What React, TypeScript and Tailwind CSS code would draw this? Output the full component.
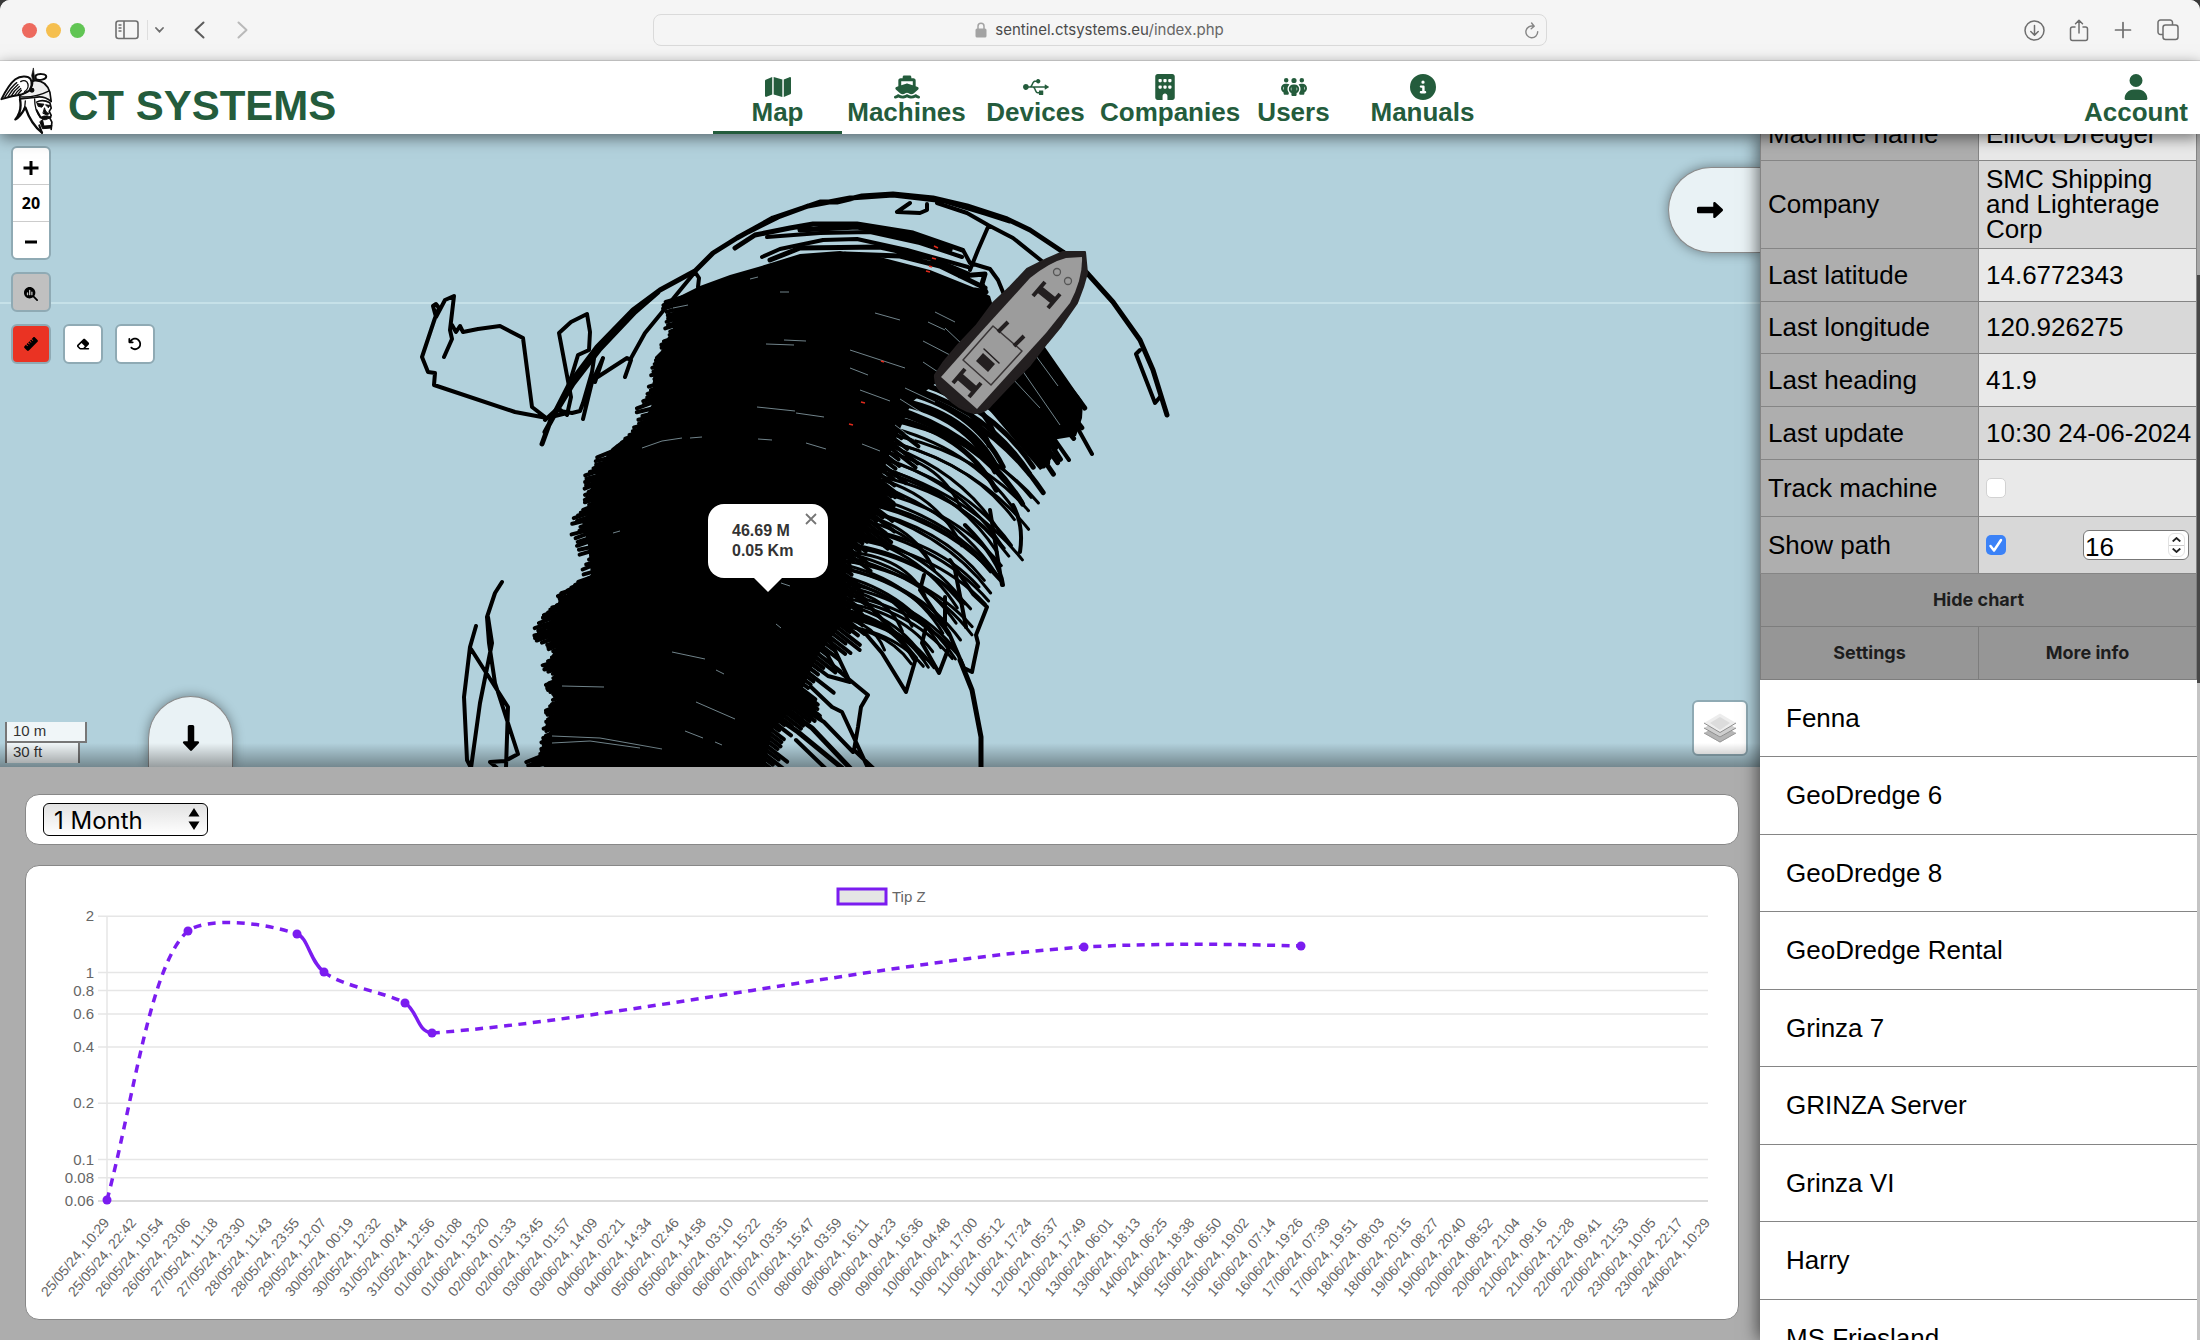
import React, { useState } from "react";
import {
  FaMap,
  FaShip,
  FaUsb,
  FaBuilding,
  FaPeopleGroup,
  FaCircleInfo,
  FaUser,
  FaMagnifyingGlassChart,
  FaRuler,
  FaEraser,
  FaArrowRotateLeft,
  FaRightLong,
  FaDownLong,
} from "react-icons/fa6";

type Point = [number, number];

/* ---------- helpers ---------- */

function createRandom(seed: number) {
  let s = seed;
  return () => {
    s = (s * 1664525 + 1013904223) % 4294967296;
    return s / 4294967296;
  };
}

function along(points: Point[], t: number): Point {
  const scaled = Math.min(0.9999, Math.max(0, t)) * (points.length - 1);
  const i = Math.floor(scaled);
  const f = scaled - i;
  return [
    points[i][0] + (points[i + 1][0] - points[i][0]) * f,
    points[i][1] + (points[i + 1][1] - points[i][1]) * f,
  ];
}

const toPath = (points: Point[]) => "M" + points.map((p) => p.map((v) => v.toFixed(1)).join(" ")).join("L");

/* ---------- browser bar ---------- */

function BrowserBar() {
  return (
    <div className="grid h-[61px] shrink-0 grid-cols-[1fr_894px_1fr] items-center border-b border-[#dcdcdc] bg-[#f5f5f5] text-[#6e6e6e]">
      <div className="flex items-center pl-[22px]">
        <div className="flex gap-[9px]">
          <span className="size-[15px] rounded-full bg-[#ed6a5e]" />
          <span className="size-[15px] rounded-full bg-[#f5bf4f]" />
          <span className="size-[15px] rounded-full bg-[#61c554]" />
        </div>
        <button aria-label="Sidebar" className="ml-[30px]">
          <svg width="24" height="20" viewBox="0 0 24 20" fill="none" stroke="currentColor" strokeWidth="1.6">
            <rect x="1" y="1" width="22" height="17.5" rx="2.5" />
            <path d="M9 1v17.5M3.5 5h3M3.5 8h3M3.5 11h3" />
          </svg>
        </button>
        <span className="ml-2 h-5 w-px bg-[#dedede]" />
        <button aria-label="Tab groups" className="ml-[7px]">
          <svg width="9" height="6" viewBox="0 0 9 6" fill="none" stroke="currentColor" strokeWidth="1.8" strokeLinecap="round">
            <path d="M1 1l3.5 3.7L8 1" />
          </svg>
        </button>
        <button aria-label="Back" className="ml-[30px]">
          <svg width="11" height="18" viewBox="0 0 11 18" fill="none" stroke="#5c5c5c" strokeWidth="2" strokeLinecap="round" strokeLinejoin="round">
            <path d="M9.5 1.5L1.5 9l8 7.5" />
          </svg>
        </button>
        <button aria-label="Forward" className="ml-8">
          <svg width="11" height="18" viewBox="0 0 11 18" fill="none" stroke="#b9b9b9" strokeWidth="2" strokeLinecap="round" strokeLinejoin="round">
            <path d="M1.5 1.5L9.5 9l-8 7.5" />
          </svg>
        </button>
      </div>
      <div className="flex h-8 items-center rounded-lg border border-[#dadada] pr-[7px] pl-5">
        <div className="flex flex-1 items-center justify-center gap-2 text-base">
          <svg width="12" height="16" viewBox="0 0 12 16" fill="none">
            <rect x="0.5" y="6.5" width="11" height="9" rx="1.5" fill="#a3a3a3" />
            <path d="M3 7V4.2a3 3 0 016 0V7" stroke="#a3a3a3" strokeWidth="1.5" />
          </svg>
          <span className="font-['Inter',sans-serif] text-[15px] text-[#4b4b4b]">
            sentinel.ctsystems.eu<span className="text-[#666]">/index.php</span>
          </span>
        </div>
        <button aria-label="Reload">
          <svg width="14" height="17" viewBox="0 0 14 17" fill="none" stroke="#858585" strokeWidth="1.4" strokeLinecap="round" strokeLinejoin="round">
            <path d="M12.7 9.8a5.9 5.9 0 11-4.2-5.6M6.6 1l2.6 3.2-3 2.6" />
          </svg>
        </button>
      </div>
      <div className="flex items-center justify-end gap-6 pr-[21px]">
        <button aria-label="Downloads">
          <svg width="21" height="21" viewBox="0 0 21 21" fill="none" stroke="currentColor" strokeWidth="1.5" strokeLinecap="round" strokeLinejoin="round">
            <circle cx="10.5" cy="10.5" r="9.5" />
            <path d="M10.5 5.5v9.5M6.8 11.5l3.7 3.7 3.7-3.7" />
          </svg>
        </button>
        <button aria-label="Share">
          <svg width="20" height="23" viewBox="0 0 20 23" fill="none" stroke="currentColor" strokeWidth="1.5" strokeLinecap="round" strokeLinejoin="round">
            <path d="M6 8H3.5A2 2 0 001.500 10v9.500a2 2 0 002 2h13a2 2 0 002-2V10a2 2 0 00-2-2H14M10 14V1.500M6.500 4.800L10 1.300l3.500 3.500" />
          </svg>
        </button>
        <button aria-label="New tab">
          <svg width="20" height="18" viewBox="0 0 20 18" fill="none" stroke="currentColor" strokeWidth="1.700" strokeLinecap="round">
            <path d="M10 1.500v15M2.500 9h15" />
          </svg>
        </button>
        <button aria-label="Tab overview">
          <svg width="22" height="22" viewBox="0 0 22 22" fill="none" stroke="currentColor" strokeWidth="1.500">
            <rect x="6" y="6" width="15" height="14.500" rx="2.500" />
            <path d="M6 15.500H3.500A2.500 2.500 0 011 13V3.500A2.500 2.500 0 013.500 1H13a2.500 2.500 0 012.500 2.500V6" />
          </svg>
        </button>
      </div>
    </div>
  );
}

/* ---------- header ---------- */

function HelmetLogo() {
  return (
    <svg width="54" height="67" viewBox="0 20 162 202" fill="none" stroke="#0b0b0b" strokeWidth="5" strokeLinejoin="round" strokeLinecap="round">
      <path d="M58 112c2 30 0 50-14 68 12-6 22-20 32-38 8 26 24 58 50 76l2-30 30 18-4-90-20-12z" fill="#fff" stroke="none" />
      <path d="M98 62c26-4 44 10 52 34l4 28c-14-12-34-16-50-12l-44 4c-2-6 0-12 4-14 20-4 34-14 34-40z" fill="#ededed" />
      <path d="M62 110c28 2 62-6 86-18" strokeWidth="4" />
      <path d="M100 24l-5 22 4 18 6-4-2-14z" fill="#0b0b0b" strokeWidth="2" />
      <path d="M107 46c8-7 32-6 32 3s-22 13-32 7z" strokeWidth="6" fill="#fff" />
      <path d="M4 117c8-16 26-48 42-60 14-10 38-12 46 0 5 10 2 24-4 34l-24 12c-18 2-42 8-60 14z" fill="#fff" strokeWidth="6" />
      <path d="M14 111c10-16 22-34 36-44M24 109c8-14 18-26 30-36M34 107c6-12 14-20 24-28M44 105c4-8 10-14 18-20M54 102l10-12M62 64c10-6 20-2 22 8 2 10-4 18-10 22" strokeWidth="4" />
      <circle cx="96" cy="90" r="5" fill="#0b0b0b" />
      <path d="M60 118c4 22 0 44-14 60 10-4 20-18 30-36 8 24 24 56 50 76" strokeWidth="7" />
      <path d="M76 122c0 12-2 22-6 30M104 116c0 18 4 40 16 54" strokeWidth="4" />
      <path d="M110 126c10-6 26-6 40 2l4 16-6 10 6 12-4 8 6 12-2 22" strokeWidth="5" />
      <path d="M112 130l20 2-6 9-10-2zM138 134l12 2-4 6zM134 144c2 8 6 14 14 16l-6 5-12-5zM122 172c8-6 22-6 32 0l-12 5c-8 4-16 2-20-5zM128 180l4 18 24-2-2 8-26 2-8-20z" fill="#0b0b0b" strokeWidth="3" />
      <path d="M110 150l12 22M118 196l8 22" strokeWidth="6" />
    </svg>
  );
}

const NAV = [
  { label: "Map", Icon: FaMap, active: true },
  { label: "Machines", Icon: FaShip },
  { label: "Devices", Icon: FaUsb },
  { label: "Companies", Icon: FaBuilding },
  { label: "Users", Icon: FaPeopleGroup },
  { label: "Manuals", Icon: FaCircleInfo },
];

function Header() {
  return (
    <header className="relative z-30 grid h-[73px] shrink-0 grid-cols-[1fr_auto_1fr] bg-white text-[#245c3c] shadow-[0_4px_14px_rgba(0,0,0,0.5)]">
      <a href="#home" className="flex items-end gap-[14px]">
        <HelmetLogo />
        <span className="pb-[5px] text-[42px] leading-[46px] font-bold">CT SYSTEMS</span>
      </a>
      <nav className="flex">
        {NAV.map(({ label, Icon, active }) => (
          <a
            key={label}
            href={"#" + label.toLowerCase()}
            className={
              "flex w-[129px] flex-col border-b-[3px] pt-[13px] text-center text-[26px] leading-6 font-bold whitespace-nowrap " +
              (active ? "border-[#245c3c]" : "border-transparent")
            }
          >
            <Icon className="mx-auto shrink-0" />
            <span>{label}</span>
          </a>
        ))}
      </nav>
      <a href="#account" className="ml-auto flex flex-col pt-[13px] pr-3 text-center text-[26px] leading-6 font-bold">
        <FaUser className="mx-auto shrink-0" />
        <span>Account</span>
      </a>
    </header>
  );
}

/* ---------- map ---------- */

const LEFT_EDGE: Point[] = [
  [676, 298], [672, 318], [674, 338], [655, 357], [653, 380], [653, 402], [642, 425], [612, 448],
  [597, 470], [590, 490], [594, 505], [582, 522], [588, 545], [591, 575], [568, 592], [562, 606],
  [549, 622], [546, 637], [558, 650], [548, 662], [556, 675], [550, 685], [566, 697], [556, 710],
  [552, 724], [548, 738], [546, 748], [540, 758], [545, 768],
];

const RIGHT_EDGE: Point[] = [
  [990, 296], [1000, 330], [950, 372], [912, 402], [895, 440], [880, 480], [878, 500], [866, 530],
  [846, 560], [846, 600], [840, 626], [818, 655], [802, 690], [796, 706], [772, 730], [765, 768],
];

const TOP_EDGE: Point[] = [
  [676, 298], [700, 286], [730, 275], [758, 267], [800, 254], [840, 251], [880, 257], [930, 270], [975, 288],
];

const FAN_START: Point[] = [[940, 300], [915, 350], [890, 410], [865, 470], [838, 530], [826, 580], [806, 630]];
const FAN_END: Point[] = [[1084, 402], [1060, 462], [1040, 500], [1016, 560], [984, 602], [955, 650], [916, 668]];

const TRACK_LINES: string[] = [
  "M444 357L452 339L450 330L454 296L445 300L436 317L433 306L436 304L439 308L435 318L422 357L428 372L435 373L434 385L515 412L547 418L567 413",
  "M452 325L456 332L460 326L463 332L478 329L500 326L523 338L532 407L545 417",
  "M545 420L558 408L567 415L571 397L559 333L571 322L587 314L590 332L589 350L578 355L568 388L557 410",
  "M595 352L592 372L583 403L580 411L572 413L560 411",
  "M583 419L592 382L603 358L595 382",
  "M593 380L627 358L631 360L625 377",
  "M630 360L645 333L695 272L699 278L698 287",
  "M937 203L967 213L988 225L1013 238L1043 262",
  "M910 203L897 212L920 213L927 210L927 204",
  "M988 227L978 250L970 270",
  "M963 250L970 263L990 269L998 280L1005 297",
  "M1140 350L1136 354L1155 403L1160 397",
  "M823 647L834 667L868 695L861 707L858 727L854 750L873 768",
  "M865 633L882 653L906 692L916 658L895 633L857 593",
  "M811 687L832 707L842 712L868 768",
  "M950 560L973 594L987 607L976 635L978 643L974 662L972 672L964 668",
  "M924 575L920 590L949 633L964 668",
  "M945 597L945 627",
  "M955 570L966 627",
  "M893 600L926 627L922 643L939 673L949 647",
  "M796 740L825 768",
  "M794 703L824 722L853 752",
  "M502 582L495 593L487 617L489 643L495 683L518 754L505 761L490 762L497 768",
  "M476 626L470 647L464 697L467 760L471 768L480 703L492 643L488 617",
  "M471 649L508 707L506 768",
  "M767 237L820 233L870 232L920 243L962 257",
  "M762 257L780 249L823 240L857 239L907 250L968 267",
  "M830 640L850 682L828 676L812 664",
  "M1072 418L1092 454",
  "M1048 430L1069 460",
  "M1013 505Q1024 525 1020 552",
  "M990 510L1002 585",
  "M965 525Q1000 560 1003 585",
];

const HEAVY_LINES: string[] = [
  "M542 444L550 422L570 383L597 347L633 310L660 290L695 271L713 253L737 238L773 218L820 202L837 202L862 196L893 194L933 198L967 206L1007 219L1030 230L1063 252L1087 273L1113 302L1140 340L1153 370L1167 415",
  "M545 432L556 412L573 384L600 349L635 312L658 292",
  "M748 232L778 217L808 206L850 198L893 195L945 201L985 213L1010 221",
  "M735 248L755 235L790 228L813 224L857 224L913 233L962 250",
  "M770 260L800 248L880 247L930 258L968 274",
  "M845 254L900 256L940 266L985 288",
  "M800 230L857 227L910 237L950 250",
  "M960 276L985 274L982 284L986 292L975 290",
  "M960 660L972 690L981 737L981 768",
  "M769 712L798 732L842 768",
  "M780 705L812 728L850 768",
];

const GAP_LINES: string[] = [
  "M750 279L758 277", "M780 292L789 292", "M766 344L794 345", "M784 340L806 341",
  "M875 313L900 320", "M928 322L945 330", "M945 328L963 345", "M923 341L950 355", "M923 362L938 372",
  "M850 350L905 368", "M757 407L795 411", "M796 413L824 417", "M642 448L662 441L682 438", "M690 438L702 437",
  "M758 439L772 440", "M806 443L826 449", "M860 390L890 401", "M672 652L705 659", "M696 702L735 719",
  "M781 583L790 586", "M776 624L781 628", "M685 731L703 738", "M562 686L604 687",
  "M552 736L600 738L662 749", "M552 743L590 741L640 748", "M673 308L688 305",
  "M850 368L868 375", "M905 388L935 402", "M900 399L930 418", "M895 425L915 440", "M862 444L880 451", "M613 533L620 531",
  "M935 312L955 322", "M715 742L722 745", "M716 670L724 674",
  "M1012 378L1040 408", "M1022 370L1060 425", "M1036 356L1058 386",
];

function buildFringe() {
  const rnd = createRandom(17);
  const out: { d: string; w: number }[] = [];
  let reach = 0;
  let run = 0;
  for (let i = 0; i < 170; i++) {
    if (run <= 0) {
      run = 2 + Math.floor(rnd() * 6);
      reach = rnd() * 13;
    }
    run -= 1;
    const [x, y] = along(LEFT_EDGE, i / 170);
    const dx = -reach - rnd() * 6;
    const slope = 0.2 + rnd() * 0.18;
    out.push({ d: toPath([[x + dx + 3, y + 4], [x + 24, y + 4 - (24 - dx) * slope]]), w: 4 });
  }
  for (let i = 0; i < 100; i++) {
    const [x, y] = along(RIGHT_EDGE, 0.25 + (i / 100) * 0.75);
    const len = 4 + rnd() * 28;
    out.push({ d: toPath([[x - 22, y - 16], [x + len * 0.75, y + len * 0.62]]), w: 4 });
  }
  for (let i = 0; i < 84; i++) {
    const t = i / 84;
    const [sx, sy] = along(FAN_START, t + (rnd() - 0.5) * 0.02);
    const [ex, ey] = along(FAN_END, t + (rnd() - 0.5) * 0.08);
    const k = 0.86 + rnd() * 0.18 - (rnd() > 0.8 ? 0.3 : 0);
    const x2 = sx + (ex - sx) * k;
    const y2 = sy + (ey - sy) * k + 4;
    const cx = (sx + x2) / 2 + 22;
    const cy = (sy + y2) / 2 - 22;
    out.push({
      d: `M${sx.toFixed(1)} ${sy.toFixed(1)}Q${cx.toFixed(1)} ${cy.toFixed(1)} ${x2.toFixed(1)} ${y2.toFixed(1)}`,
      w: t < 0.35 ? 5 : 3,
    });
  }
  return out;
}

const FRINGE = buildFringe();
const MASS = toPath([...TOP_EDGE, ...RIGHT_EDGE, ...LEFT_EDGE.slice(1).reverse()]) + "Z";

function Ship() {
  return (
    <g strokeLinecap="round" strokeLinejoin="round">
      <path
        d="M1085 252L1087 273L1083 287L1077 303L1061 326L1047 343L1030 365L1010 385L993 403Q985 414 974 413Q958 409 947 397Q934 388 935 375L943 363L958 345L976 326L993 303L1010 287L1027 269L1047 259L1063 252Z"
        fill="#231f20"
        stroke="#231f20"
        strokeWidth="2"
      />
      <path d="M1082 257Q1083 278 1070 303L1046 333L977 409L941 377L980 333L1030 278Q1050 262 1066 258Z" fill="#9c9c9c" />
      <path d="M993 326L1022 351L991 385L963 360Z" fill="none" stroke="#3a3637" strokeWidth="1.500" />
      <path d="M983 353L995 364L988 372L976 361Z" fill="#231f20" />
      <path d="M984 349L999 363" stroke="#231f20" strokeWidth="1.500" />
      <g fill="none" stroke="#231f20" strokeLinecap="butt">
        <path d="M1008 322L998 332M1024 336L1014 346" strokeWidth="4" />
        <path d="M1045 282L1033 296M1060 294L1048 308M965 369L953 383M981 383L969 397" strokeWidth="4" />
        <path d="M1039 289L1054 301M959 376L975 390" strokeWidth="8" />
      </g>
      <circle cx="1057" cy="272" r="3.500" fill="none" stroke="#555" strokeWidth="1.300" />
      <circle cx="1068" cy="281" r="3.500" fill="none" stroke="#555" strokeWidth="1.300" />
    </g>
  );
}

function MapDrawing() {
  return (
    <svg className="absolute inset-0 size-full" viewBox="0 134 1760 633" preserveAspectRatio="xMidYMin slice" aria-hidden="true">
      <path d="M0 303H1760" stroke="#cde6ec" strokeWidth="1.500" />
      <path d={MASS} fill="#000" />
      <path d="M1000 300L1040 340L1083 402L1082 418L1076 436L1052 440L1050 464L1040 470L985 405L960 370Z" fill="#000" />
      <g fill="none" stroke="#000" strokeLinecap="round" strokeLinejoin="round">
        {FRINGE.map((s, i) => (
          <path key={i} d={s.d} strokeWidth={s.w} />
        ))}
        <path d={TRACK_LINES.join("")} strokeWidth="4" />
        <path d={HEAVY_LINES.join("")} strokeWidth="5" />
      </g>
      <path d={GAP_LINES.join("")} fill="none" stroke="#b2d1dc" strokeOpacity="0.7" strokeWidth="0.900" />
      <path d="M934 246l4 2M932 258l4 1M929 266l3 1M926 271l4 1M881 361l3 1M861 402l4 1M849 424l4 1" stroke="#e02a1c" strokeWidth="1.500" />
      <Ship />
    </svg>
  );
}

const MAP_BTN = "flex size-9 items-center justify-center text-sm text-black";
const MAP_FRAME = "rounded-md border-2 border-[#8faab4] bg-white overflow-hidden";

function MapView() {
  return (
    <section aria-label="Map" className="relative min-h-0 flex-1 overflow-hidden bg-[#b2d1dc]">
      <MapDrawing />

      <div className="absolute top-3 left-[11px] flex flex-col items-start gap-3 font-['Noto_Sans',sans-serif]">
        <div className={MAP_FRAME}>
          <button aria-label="Zoom in" className={MAP_BTN + " pt-1"}>
            <svg width="16" height="16" viewBox="0 0 16 16" stroke="#000" strokeWidth="3"><path d="M8 1v14M.5 8h15" /></svg>
          </button>
          <div className="flex h-[38px] w-9 items-center justify-center border-y border-[#ccc] text-base font-bold">20</div>
          <button aria-label="Zoom out" className={MAP_BTN + " pt-1"}>
            <svg width="12" height="4" viewBox="0 0 12 4" stroke="#000" strokeWidth="3"><path d="M0 2h12" /></svg>
          </button>
        </div>
        <div className="rounded-md border-2 border-[#8faab4] bg-[#c0c0c0]">
          <button aria-label="Chart area" className={MAP_BTN + " pt-1"}><FaMagnifyingGlassChart /></button>
        </div>
        <div className="flex gap-3">
          <div className="rounded-md border-2 border-[#8faab4] bg-[#ea3323]">
            <button aria-label="Measure" className={MAP_BTN}><FaRuler /></button>
          </div>
          <div className={MAP_FRAME}>
            <button aria-label="Erase" className={MAP_BTN}><FaEraser /></button>
          </div>
          <div className={MAP_FRAME}>
            <button aria-label="Undo" className={MAP_BTN}><FaArrowRotateLeft /></button>
          </div>
        </div>
      </div>

      <div className="absolute bottom-1 left-[5px] flex flex-col items-start text-[15px] leading-[17px] text-[#333]">
        <div className="w-[82px] border-2 border-t-0 border-[#777] bg-white/80 pb-[2px] pl-[6px]">10 m</div>
        <div className="w-[75px] border-x-2 border-[#777] bg-white/80 pb-[3px] pl-[6px]">30 ft</div>
      </div>

      <button
        aria-label="Collapse chart"
        className="absolute bottom-0 left-[148px] flex h-[71px] w-[85px] justify-center rounded-t-full border border-b-0 border-[#8a8a8a] bg-[#e9f2f5] pt-7 text-[26px] shadow-[0_0_12px_rgba(0,0,0,0.4)]"
      >
        <FaDownLong />
      </button>

      <button
        aria-label="Collapse panel"
        className="absolute top-[33px] right-0 flex h-[86px] w-[92px] items-center rounded-l-full border border-r-0 border-[#8a8a8a] bg-[#e9f2f5] pl-7 text-[26px] shadow-[0_0_12px_rgba(0,0,0,0.4)]"
      >
        <FaRightLong />
      </button>

      <button
        aria-label="Layers"
        className="absolute right-3 bottom-[11px] flex size-14 items-center justify-center rounded-md border-2 border-[#8faab4] bg-white"
      >
        <svg width="32" height="30" viewBox="0 0 32 30">
          <path d="M0 20l16-9 16 9-16 9.500z" fill="#b5b5b5" />
          <path d="M0 20l16 9 16-9" fill="none" stroke="#999" />
          <path d="M0 15l16-9 16 9-16 9.500z" fill="#cfcfcf" />
          <path d="M0 15l16 9 16-9" fill="none" stroke="#8d8d8d" />
          <path d="M0 10L16 .5 32 10l-16 9.500z" fill="#ededed" />
          <path d="M6 10l10-6 10 6-10 7z" fill="#dcdcdc" />
          <path d="M0 10l16 9.500L32 10" fill="none" stroke="#8d8d8d" />
        </svg>
      </button>

      <div className="absolute bottom-[175px] left-[708px] flex flex-col items-center">
        <div className="relative h-[74px] w-[120px] rounded-2xl bg-white pt-[17px] pl-6 text-base leading-5 font-bold text-[#333]">
          46.69 M<br />
          0.05 Km
          <button aria-label="Close" className="absolute top-[9px] right-[11px] flex">
            <svg width="12" height="12" viewBox="0 0 12 12" stroke="#757575" strokeWidth="1.800"><path d="M1 1l10 10M11 1L1 11" /></svg>
          </button>
        </div>
        <svg width="28" height="14" viewBox="0 0 28 14"><path d="M0 0h28L14 14z" fill="#fff" /></svg>
      </div>

      <div className="pointer-events-none absolute inset-x-0 bottom-0 h-6 bg-linear-to-t from-black/35 to-transparent" />
    </section>
  );
}

/* ---------- chart ---------- */

const Y_TICKS = [2, 1, 0.8, 0.6, 0.4, 0.2, 0.1, 0.08, 0.06];
const yOf = (v: number) => 973.5 - Math.log2(v) * 56.3;

const pad = (n: number) => String(n).padStart(2, "0");
const START = Date.UTC(2024, 4, 25, 10, 29, 58, 600);
const X_STEP = (30 * 24 * 3600 * 1000) / 59;
const X_LABELS = Array.from({ length: 60 }, (_, i) => {
  const d = new Date(START + i * X_STEP);
  return `${pad(d.getUTCDate())}/${pad(d.getUTCMonth() + 1)}/24, ${pad(d.getUTCHours())}:${pad(d.getUTCMinutes())}`;
});

const DOTS: Point[] = [
  [107, 1201], [188, 932], [297, 935], [324, 973], [405, 1004], [432, 1034], [1084, 948], [1301, 947],
];

function Chart() {
  return (
    <svg viewBox="26 867 1712 453" className="block w-full" role="img" aria-label="Tip Z chart" fontSize="15" fill="#666">
      <rect x="838" y="890" width="48" height="15" fill="#e5e5e5" stroke="#7b1cf0" strokeWidth="3" />
      <text x="892" y="903">Tip Z</text>
      {Y_TICKS.map((v) => (
        <g key={v}>
          <path d={`M98 ${yOf(v)}H1708`} stroke={v === 0.06 ? "#cfcfcf" : "#e6e6e6"} strokeWidth="1.500" />
          <text x="94" y={yOf(v) + 5} textAnchor="end">{v}</text>
        </g>
      ))}
      <path d="M107 917V1202" stroke="#e6e6e6" strokeWidth="1.500" />
      <g fontSize="14">
        {X_LABELS.map((label, i) => {
          const x = 110 + i * 27.13;
          return (
            <text key={label} x={x} y="1224" textAnchor="end" transform={`rotate(-50 ${x} 1224)`}>{label}</text>
          );
        })}
      </g>
      <g fill="none" stroke="#7b1cf0" strokeWidth="3.500">
        <path
          strokeDasharray="8 6.500"
          d="M107 1201C134 1100 150 965 188 932C207 918 262 923 297 935M324 973C343 988 385 993 405 1004M432 1034C620 1020 900 960 1084 948C1160 944 1230 945 1301 947"
        />
        <path d="M297 935C308 938 310 963 324 973M405 1004C418 1012 417 1033 432 1034" />
      </g>
      {DOTS.map(([x, y]) => (
        <circle key={x} cx={x} cy={y} r="4.500" fill="#7b1cf0" />
      ))}
    </svg>
  );
}

function ChartPanel() {
  return (
    <section className="flex shrink-0 flex-col gap-5 bg-[#adadad] pt-[27px] pr-[21px] pb-5 pl-[25px]">
      <div className="flex h-[51px] items-center rounded-[14px] border border-[#888] bg-white pl-[17px]">
        <div className="relative">
          <select
            aria-label="Period"
            defaultValue="1 Month"
            className="h-[33px] w-[165px] appearance-none rounded-md border border-black bg-linear-to-b from-[#e2e2e2] to-white pt-[3px] pl-[10px] font-['Inter',sans-serif] text-2xl leading-7 text-black"
          >
            <option>1 Day</option>
            <option>1 Week</option>
            <option>1 Month</option>
          </select>
          <svg className="pointer-events-none absolute top-[5px] right-2" width="12" height="22" viewBox="0 0 12 22">
            <path d="M6 0l5.500 8.500H.5zM6 22l5.500-8.500H.5z" />
          </svg>
        </div>
      </div>
      <div className="rounded-[14px] border border-[#888] bg-white">
        <Chart />
      </div>
    </section>
  );
}

/* ---------- side panel ---------- */

const LABEL = "border border-[#858585] bg-[#aeaeae] px-[7px] text-left font-normal";
const LIGHT = "border border-[#858585] bg-[#e9e9e9] px-[7px] whitespace-nowrap";
const DARK = "border border-[#858585] bg-[#d8d8d8] px-[7px]";
const ACTION = "border border-[#7d7d7d] bg-[#969696] p-0";
const ACTION_BTN = "h-[52px] w-full font-['Inter',sans-serif] text-lg font-bold text-[#1d1d1d]";

const MACHINES = [
  "Fenna", "GeoDredge 6", "GeoDredge 8", "GeoDredge Rental", "Grinza 7", "GRINZA Server", "Grinza VI", "Harry", "MS Friesland",
];

function SidePanel() {
  const [track, setTrack] = useState(false);
  const [showPath, setShowPath] = useState(true);
  const [count, setCount] = useState(16);
  return (
    <aside className="relative z-20 flex w-1/5 shrink-0 bg-white shadow-[-2px_0_16px_rgba(0,0,0,0.6)]">
      <div className="-mt-[27px] min-w-0 flex-1 overflow-hidden text-[26px] leading-[25px]">
        <table className="w-full table-fixed border-collapse">
          <tbody>
            <tr className="h-[53px]">
              <th className={LABEL}>Machine name</th>
              <td className={LIGHT}>Ellicot Dredger</td>
            </tr>
            <tr className="h-[88px]">
              <th className={LABEL}>Company</th>
              <td className={DARK}>SMC Shipping and Lighterage Corp</td>
            </tr>
            <tr className="h-[53px]">
              <th className={LABEL}>Last latitude</th>
              <td className={LIGHT}>14.6772343</td>
            </tr>
            <tr className="h-[52px]">
              <th className={LABEL}>Last longitude</th>
              <td className={DARK}>120.926275</td>
            </tr>
            <tr className="h-[53px]">
              <th className={LABEL}>Last heading</th>
              <td className={LIGHT}>41.9</td>
            </tr>
            <tr className="h-[53px]">
              <th className={LABEL}>Last update</th>
              <td className={DARK + " whitespace-nowrap"}>10:30 24-06-2024</td>
            </tr>
            <tr className="h-[57px]">
              <th className={LABEL}><label htmlFor="track">Track machine</label></th>
              <td className={LIGHT}>
                <input
                  id="track"
                  type="checkbox"
                  checked={track}
                  onChange={(e) => setTrack(e.target.checked)}
                  className="block size-5 appearance-none rounded-[5px] border border-[#d2d2d2] bg-white checked:bg-[#3b82f7]"
                />
              </td>
            </tr>
            <tr className="h-[57px]">
              <th className={LABEL}><label htmlFor="path">Show path</label></th>
              <td className={DARK}>
                <div className="flex items-center justify-between">
                  <span className="relative">
                    <input
                      id="path"
                      type="checkbox"
                      checked={showPath}
                      onChange={(e) => setShowPath(e.target.checked)}
                      className="block size-5 appearance-none rounded-[5px] bg-white checked:bg-[#3b82f7]"
                    />
                    {showPath && (
                      <svg className="pointer-events-none absolute inset-0" width="20" height="20" viewBox="0 0 20 20" fill="none" stroke="#fff" strokeWidth="2.500" strokeLinecap="round" strokeLinejoin="round">
                        <path d="M4.500 11l3.500 4.500L15 5" />
                      </svg>
                    )}
                  </span>
                  <span className="relative">
                    <input
                      type="number"
                      aria-label="Path days"
                      value={count}
                      onChange={(e) => setCount(Number(e.target.value))}
                      className="block h-[30px] w-[106px] [appearance:textfield] rounded-md border border-[#777] bg-white pt-1 pl-px text-[26px] leading-6 [&::-webkit-inner-spin-button]:hidden"
                    />
                    <span className="absolute top-[3px] right-1 flex h-6 w-[17px] flex-col divide-y divide-[#ccc] rounded-md border border-[#e2e2e2] bg-white">
                      <button aria-label="Increase" onClick={() => setCount(count + 1)} className="flex flex-1 items-center justify-center">
                        <svg width="9" height="5" viewBox="0 0 9 5" fill="none" stroke="#222" strokeWidth="1.800"><path d="M.7 4.500l3.800-3.500 3.800 3.500" /></svg>
                      </button>
                      <button aria-label="Decrease" onClick={() => setCount(count - 1)} className="flex flex-1 items-center justify-center">
                        <svg width="9" height="5" viewBox="0 0 9 5" fill="none" stroke="#222" strokeWidth="1.800"><path d="M.7.5l3.800 3.500L8.300.5" /></svg>
                      </button>
                    </span>
                  </span>
                </div>
              </td>
            </tr>
            <tr>
              <td colSpan={2} className={ACTION}><button className={ACTION_BTN}>Hide chart</button></td>
            </tr>
            <tr>
              <td className={ACTION}><button className={ACTION_BTN}>Settings</button></td>
              <td className={ACTION}><button className={ACTION_BTN}>More info</button></td>
            </tr>
          </tbody>
        </table>
        <ul>
          {MACHINES.map((name) => (
            <li key={name} className="h-[77px] border-b border-[#858585] even:h-[78px]">
              <button className="size-full pl-[26px] text-left">{name}</button>
            </li>
          ))}
        </ul>
      </div>
      <div className="flex w-[3px] flex-col bg-[#c4c4c4]">
        <div className="h-[141px] bg-[#a8a8a8]" />
        <div className="h-[408px] bg-[#484848]" />
      </div>
    </aside>
  );
}

export default function App() {
  return (
    <div className="h-screen bg-[#3a3a3a] font-['Liberation_Sans',Arial,sans-serif] text-black">
      <div className="flex h-full flex-col overflow-hidden rounded-t-[10px] bg-white">
        <BrowserBar />
        <Header />
        <div className="flex min-h-0 flex-1">
          <main className="flex min-w-0 flex-1 flex-col">
            <MapView />
            <ChartPanel />
          </main>
          <SidePanel />
        </div>
      </div>
    </div>
  );
}
